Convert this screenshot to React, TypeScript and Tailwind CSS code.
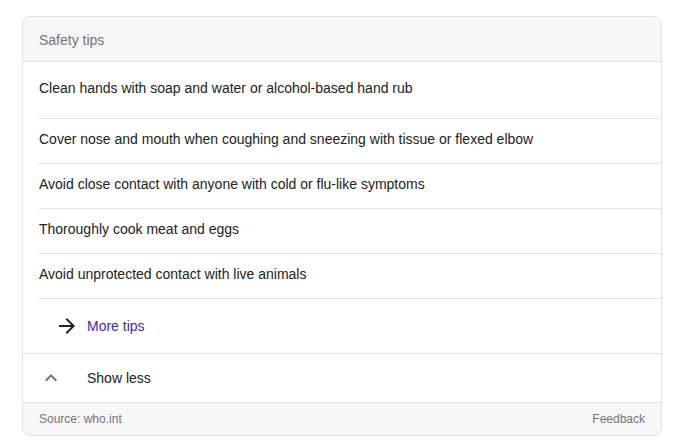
import { useState } from "react";

const tips = [
  "Clean hands with soap and water or alcohol-based hand rub",
  "Cover nose and mouth when coughing and sneezing with tissue or flexed elbow",
  "Avoid close contact with anyone with cold or flu-like symptoms",
  "Thoroughly cook meat and eggs",
  "Avoid unprotected contact with live animals",
];

export default function App() {
  const [open, setOpen] = useState(true);

  return (
    <div className="min-h-screen bg-white pl-[22px] pt-4 font-['Liberation_Sans',Arial,sans-serif]">
      <div className="w-[640px] overflow-hidden rounded-lg border border-[#dfe1e5] bg-white">
        <div className="flex h-[45px] items-center border-b border-[#dfe1e5] bg-[#f7f7f7] px-4 pt-[2px] text-sm text-[#70757a]">
          Safety tips
        </div>

        {open && (
          <>
            <div className="pl-4">
              {tips.map((t, i) => (
                <div
                  key={t}
                  className={
                    i === 0
                      ? "flex h-[57px] items-start border-b border-[#e4e4e4] pt-4 text-sm text-[#222]"
                      : "flex h-[45px] items-center border-b border-[#e4e4e4] pb-1 text-sm text-[#222]"
                  }
                >
                  {t}
                </div>
              ))}
            </div>

            <a
              href="#"
              className="flex h-[55px] items-center border-b border-[#dfe1e5] pl-[32px] text-sm text-[#3f2ba3]"
            >
              <svg viewBox="0 0 24 24" className="mr-2 h-6 w-6 fill-[#202124]">
                <path d="M12 4l-1.41 1.41L16.17 11H4v2h12.17l-5.58 5.59L12 20l8-8z" />
              </svg>
              More tips
            </a>
          </>
        )}

        <button
          onClick={() => setOpen(!open)}
          className="flex h-[49px] w-full items-center border-b border-[#dfe1e5] pl-4 text-left text-sm text-[#202124]"
        >
          <svg viewBox="0 0 24 24" className="mr-6 h-6 w-6 fill-[#70757a]">
            {open ? (
              <path d="M12 8l-6 6 1.41 1.41L12 10.83l4.59 4.58L18 14z" />
            ) : (
              <path d="M16.59 8.59L12 13.17 7.41 8.59 6 10l6 6 6-6z" />
            )}
          </svg>
          {open ? "Show less" : "Show more"}
        </button>

        <div className="flex h-8 items-center justify-between bg-[#f7f7f7] px-4 text-xs text-[#70757a]">
          <span>Source: who.int</span>
          <span>Feedback</span>
        </div>
      </div>
    </div>
  );
}
